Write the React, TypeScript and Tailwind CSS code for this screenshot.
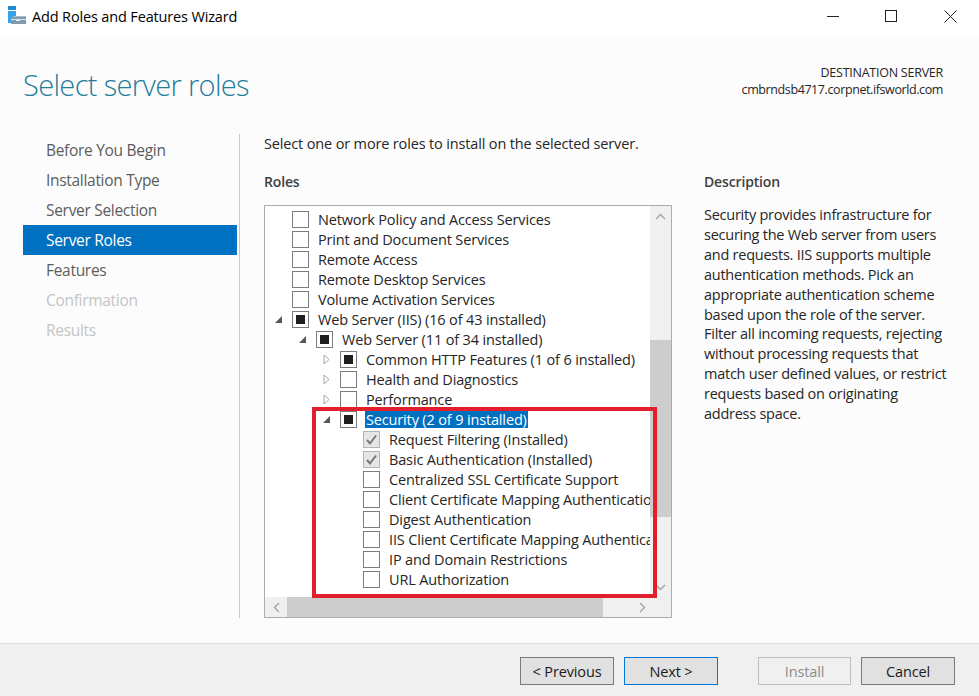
import { ReactNode } from 'react'

type Check = 'none' | 'partial' | 'checked'
type Arrow = 'open' | 'closed' | null

interface TreeRow {
  label: string
  depth: number
  check: Check
  arrow: Arrow
  selected?: boolean
}

const steps = [
  { label: 'Before You Begin', state: 'normal' },
  { label: 'Installation Type', state: 'normal' },
  { label: 'Server Selection', state: 'normal' },
  { label: 'Server Roles', state: 'active' },
  { label: 'Features', state: 'normal' },
  { label: 'Confirmation', state: 'disabled' },
  { label: 'Results', state: 'disabled' },
]

const rows: TreeRow[] = [
  { label: 'Network Policy and Access Services', depth: 0, check: 'none', arrow: null },
  { label: 'Print and Document Services', depth: 0, check: 'none', arrow: null },
  { label: 'Remote Access', depth: 0, check: 'none', arrow: null },
  { label: 'Remote Desktop Services', depth: 0, check: 'none', arrow: null },
  { label: 'Volume Activation Services', depth: 0, check: 'none', arrow: null },
  { label: 'Web Server (IIS) (16 of 43 installed)', depth: 0, check: 'partial', arrow: 'open' },
  { label: 'Web Server (11 of 34 installed)', depth: 1, check: 'partial', arrow: 'open' },
  { label: 'Common HTTP Features (1 of 6 installed)', depth: 2, check: 'partial', arrow: 'closed' },
  { label: 'Health and Diagnostics', depth: 2, check: 'none', arrow: 'closed' },
  { label: 'Performance', depth: 2, check: 'none', arrow: 'closed' },
  { label: 'Security (2 of 9 installed)', depth: 2, check: 'partial', arrow: 'open', selected: true },
  { label: 'Request Filtering (Installed)', depth: 3, check: 'checked', arrow: null },
  { label: 'Basic Authentication (Installed)', depth: 3, check: 'checked', arrow: null },
  { label: 'Centralized SSL Certificate Support', depth: 3, check: 'none', arrow: null },
  { label: 'Client Certificate Mapping Authentication', depth: 3, check: 'none', arrow: null },
  { label: 'Digest Authentication', depth: 3, check: 'none', arrow: null },
  { label: 'IIS Client Certificate Mapping Authentication', depth: 3, check: 'none', arrow: null },
  { label: 'IP and Domain Restrictions', depth: 3, check: 'none', arrow: null },
  { label: 'URL Authorization', depth: 3, check: 'none', arrow: null },
]

const depthClass = ['pl-[9px]', 'pl-[33px]', 'pl-[57px]', 'pl-[98px]']

function Checkbox({ check }: { check: Check }) {
  if (check === 'checked') {
    return (
      <span className="w-[17px] h-[17px] shrink-0 border border-[#b4b4b4] bg-[#e6e6e6] flex items-center justify-center">
        <svg width="13" height="13" viewBox="0 0 13 13" fill="none">
          <path d="M2 7l3 3.5L11 2.5" stroke="#777777" strokeWidth="2" />
        </svg>
      </span>
    )
  }
  return (
    <span className="w-[17px] h-[17px] shrink-0 border border-[#7d7d7d] bg-white flex items-center justify-center">
      {check === 'partial' && <span className="w-[9px] h-[9px] bg-[#1f1f1f]" />}
    </span>
  )
}

function TreeArrow({ arrow }: { arrow: Arrow }) {
  if (arrow === 'open') {
    return (
      <svg width="9" height="9" viewBox="0 0 9 9" className="shrink-0 mr-[9px]">
        <path d="M8 1v7H1z" fill="#595959" />
      </svg>
    )
  }
  return (
    <svg width="9" height="11" viewBox="0 0 9 11" className="shrink-0 mr-[9px]">
      <path d="M2 1l5 4.5L2 10z" fill="white" stroke="#a6a6a6" />
    </svg>
  )
}

function Row({ row }: { row: TreeRow }) {
  return (
    <div className={`h-[20px] flex items-center whitespace-nowrap ${depthClass[row.depth]}`}>
      {row.arrow && <TreeArrow arrow={row.arrow} />}
      {!row.arrow && row.depth === 0 && <span className="w-[18px] shrink-0" />}
      <Checkbox check={row.check} />
      <span
        className={
          row.selected
            ? 'ml-[8px] px-px h-[18px] leading-[20px] bg-[#0070c0] text-white'
            : 'ml-[9px] pt-[2px] text-[#262626]'
        }
      >
        {row.label}
      </span>
    </div>
  )
}

function ScrollButton({ children }: { children: ReactNode }) {
  return <div className="h-[20px] flex items-center justify-center shrink-0">{children}</div>
}

function WizardButton({ label, variant }: { label: string; variant?: 'default' | 'disabled' }) {
  let cls = 'w-[94px] border-[#7a7a7a] bg-[#e1e1e1] text-[#1a1a1a]'
  if (variant === 'default') cls = 'w-[94px] border-[#0078d7] bg-[#e1e1e1] text-[#1a1a1a]'
  if (variant === 'disabled') cls = 'w-[93px] border-[#bfbfbf] bg-[#f0f0f0] text-[#8c8c8c]'
  return (
    <button className={`h-[28px] pt-[2px] border text-[14.5px] tracking-[-0.15px] flex items-center justify-center ${cls}`}>
      {label}
    </button>
  )
}

export default function App() {
  return (
    <div className="w-[979px] h-[696px] flex flex-col overflow-hidden bg-white font-['Open_Sans',sans-serif] text-[14.5px] tracking-[-0.15px] text-[#262626]">
      <div className="h-[37px] pb-[5px] flex items-center bg-white shrink-0">
        <svg width="19" height="18" viewBox="0 0 19 18" className="ml-[7px] mb-[2px] shrink-0">
          <rect x="1" y="0" width="8" height="4" fill="#1e88d2" />
          <rect x="1" y="5" width="8" height="12" fill="#35a3e6" />
          <rect x="6" y="10" width="13" height="2" fill="#a9bac6" />
          <rect x="4" y="11" width="15" height="7" fill="#7f9bb0" />
          <rect x="4" y="13" width="15" height="1" fill="#d8e2ea" />
          <rect x="9" y="14" width="4" height="1" fill="#f4f4f4" />
        </svg>
        <span className="ml-[6px] pt-[2px] text-black">Add Roles and Features Wizard</span>
        <div className="ml-auto flex items-center">
          <span className="w-[46px] h-[32px] flex items-center justify-center">
            <span className="w-[12px] h-px bg-[#222222]" />
          </span>
          <span className="w-[46px] h-[32px] ml-[12px] flex items-center justify-center">
            <span className="w-[12px] h-[12px] border border-[#222222]" />
          </span>
          <span className="w-[46px] h-[32px] ml-[13px] mr-[6px] flex items-center justify-center">
            <svg width="13" height="13" viewBox="0 0 13 13" fill="none">
              <path d="M0.5 0.5l12 12M12.5 0.5l-12 12" stroke="#222222" />
            </svg>
          </span>
        </div>
      </div>

      <div className="flex-1 flex flex-col bg-[#fcfcfc] min-h-0">
        <div className="h-[97px] shrink-0 flex justify-between pl-[23px] pr-[36px]">
          <h1 className="mt-[26px] text-[29px] leading-[44px] font-light tracking-[-0.65px] text-[#1f7c9a]">
            Select server roles
          </h1>
          <div className="mt-[27px] text-right text-[12.5px] leading-[17px] text-[#262626]">
            <div className="tracking-[-0.25px]">DESTINATION SERVER</div>
            <div className="tracking-[-0.4px]">cmbrndsb4717.corpnet.ifsworld.com</div>
          </div>
        </div>

        <div className="flex pl-[23px] h-[484px] shrink-0">
          <nav className="w-[214px] shrink-0 text-[15.5px] tracking-[-0.3px] pt-px">
            {steps.map((s) => (
              <div
                key={s.label}
                className={
                  s.state === 'active'
                    ? 'h-[30px] pt-[2px] flex items-center pl-[23px] bg-[#0070c0] text-white'
                    : s.state === 'disabled'
                      ? 'h-[30px] pt-[2px] flex items-center pl-[23px] text-[#c4c4c4]'
                      : 'h-[30px] pt-[2px] flex items-center pl-[23px] text-[#5c5c5c]'
                }
              >
                {s.label}
              </div>
            ))}
          </nav>
          <div className="w-px ml-[2px] bg-[#c9c9c9] shrink-0" />
          <div className="ml-[24px] flex-1 flex flex-col min-w-0">
            <p className="h-[20px] leading-[20px]">Select one or more roles to install on the selected server.</p>
            <div className="flex mt-[18px] flex-1 min-h-0">
              <div className="w-[408px] shrink-0 flex flex-col">
                <h2 className="h-[20px] leading-[20px] text-[14px] font-semibold text-[#404040] shrink-0">Roles</h2>
                <div className="relative mt-[13px] h-[413px] border border-[#acacac] bg-white flex flex-col">
                  <div className="flex flex-1 min-h-0">
                    <div className="w-[385px] pt-[3px] overflow-hidden">
                      {rows.map((r) => (
                        <Row key={r.label} row={r} />
                      ))}
                    </div>
                    <div className="w-[21px] bg-[#f0f0f0] flex flex-col">
                      <ScrollButton>
                        <svg width="11" height="7" viewBox="0 0 11 7" fill="none">
                          <path d="M1 6l4.5-4.5L10 6" stroke="#a8a8a8" strokeWidth="1.5" />
                        </svg>
                      </ScrollButton>
                      <div className="h-[114px] shrink-0" />
                      <div className="h-[177px] bg-[#cdcdcd] shrink-0" />
                      <div className="flex-1" />
                      <ScrollButton>
                        <svg width="11" height="7" viewBox="0 0 11 7" fill="none">
                          <path d="M1 1l4.5 4.5L10 1" stroke="#a8a8a8" strokeWidth="1.5" />
                        </svg>
                      </ScrollButton>
                    </div>
                  </div>
                  <div className="h-[20px] bg-[#f0f0f0] flex shrink-0">
                    <div className="w-[22px] flex items-center justify-center shrink-0">
                      <svg width="7" height="11" viewBox="0 0 7 11" fill="none">
                        <path d="M6 1L1.5 5.5 6 10" stroke="#a8a8a8" strokeWidth="1.5" />
                      </svg>
                    </div>
                    <div className="w-[316px] bg-[#cdcdcd] shrink-0" />
                    <div className="flex-1 flex items-center justify-center pr-[26px]">
                      <svg width="7" height="11" viewBox="0 0 7 11" fill="none" className="ml-[36px]">
                        <path d="M1 1l4.5 4.5L1 10" stroke="#a8a8a8" strokeWidth="1.5" />
                      </svg>
                    </div>
                  </div>
                  <div className="absolute left-[47px] top-[201px] w-[345px] h-[191px] border-[4px] border-[#e0202c]" />
                </div>
              </div>
              <div className="ml-[32px] w-[260px] shrink-0">
                <h2 className="h-[20px] leading-[20px] text-[14px] font-semibold text-[#404040]">Description</h2>
                <p className="mt-[13px] leading-[19.9px] tracking-[-0.25px] whitespace-nowrap">
                  Security provides infrastructure for<br />
                  securing the Web server from users<br />
                  and requests. IIS supports multiple<br />
                  authentication methods. Pick an<br />
                  appropriate authentication scheme<br />
                  based upon the role of the server.<br />
                  Filter all incoming requests, rejecting<br />
                  without processing requests that<br />
                  match user defined values, or restrict<br />
                  requests based on originating<br />
                  address space.
                </p>
              </div>
            </div>
          </div>
        </div>
        <div className="flex-1" />
      </div>

      <div className="h-[53px] shrink-0 bg-[#f0f0f0] border-t border-[#dfdfdf] flex items-start justify-end pt-[13px] pr-[24px]">
        <WizardButton label="< Previous" />
        <div className="ml-[10px]">
          <WizardButton label="Next >" variant="default" />
        </div>
        <div className="ml-[40px]">
          <WizardButton label="Install" variant="disabled" />
        </div>
        <div className="ml-[10px]">
          <WizardButton label="Cancel" />
        </div>
      </div>
    </div>
  )
}
